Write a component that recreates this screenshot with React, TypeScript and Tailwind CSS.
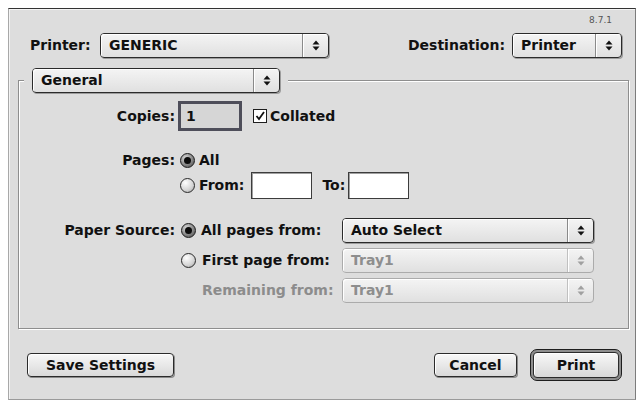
import React from 'react';

const Arrows = ({ disabled }: { disabled?: boolean }) => (
  <svg width="8" height="11" viewBox="0 0 8 11" className={disabled ? 'text-[#a0a0a0]' : 'text-[#111]'}>
    <path d="M4 0.5L7.5 4.5H0.5Z M4 10.5L0.5 6.5H7.5Z" fill="currentColor" />
  </svg>
);

const Popup = ({ label, className, disabled }: { label: string; className: string; disabled?: boolean }) => (
  <div
    className={`flex h-[25px] items-stretch rounded-[4px] border bg-gradient-to-b from-[#f4f4f4] to-[#e0e0e0] ${
      disabled ? 'border-[#ababab] text-[#8e8e8e]' : 'border-[#2b2b2b] text-[#111] shadow-[1px_1px_0_#9c9c9c]'
    } ${className}`}
  >
    <div className="flex flex-1 items-center rounded-l-[3px] pl-[8px] shadow-[inset_1px_1px_0_#ffffff]">{label}</div>
    <div
      className={`flex w-[26px] items-center justify-center rounded-r-[3px] border-l shadow-[inset_1px_1px_0_#ffffff] ${
        disabled ? 'border-[#c0c0c0]' : 'border-[#8a8a8a]'
      }`}
    >
      <Arrows disabled={disabled} />
    </div>
  </div>
);

const Radio = ({ checked }: { checked?: boolean }) =>
  checked ? (
    <span className="flex h-[15px] w-[15px] shrink-0 items-center justify-center rounded-full border border-[#1a1a1a] bg-[radial-gradient(circle_at_35%_30%,#d8d8d8,#6a6a6a_75%)]">
      <span className="h-[7px] w-[7px] rounded-full bg-[#0c0c0c]" />
    </span>
  ) : (
    <span className="block h-[15px] w-[15px] shrink-0 rounded-full border border-[#2a2a2a] bg-[radial-gradient(circle_at_35%_30%,#ffffff,#d4d4d4_60%,#9c9c9c)]" />
  );

const Field = ({ className, children }: { className: string; children?: React.ReactNode }) => (
  <div className={`flex items-center border border-[#3c3c3c] bg-white shadow-[inset_1px_1px_0_#a0a0a0] ${className}`}>
    {children}
  </div>
);

const Btn = ({ children, className }: { children: React.ReactNode; className: string }) => (
  <button
    type="button"
    className={`flex h-[24px] items-center justify-center rounded-[4px] border border-[#2b2b2b] bg-gradient-to-b from-[#f8f8f8] to-[#d9d9d9] text-[#111] shadow-[1px_1px_0_#8a8a8a,inset_1px_1px_0_#ffffff] ${className}`}
  >
    {children}
  </button>
);

export default function App() {
  return (
    <div className="h-[401px] w-[640px] bg-white pl-[8px] pt-[8px]">
      <div className="flex h-[392px] w-[628px] flex-col border-t border-l border-r border-b border-t-[#333333] border-l-[#a8a8a8] border-r-[#7c7c7c] border-b-[#9a9a9a] bg-[#dddddd] font-['DejaVu_Sans',sans-serif] text-[14px] font-bold text-[#111] shadow-[inset_1px_1px_0_#f4f4f4]">
        <div className="h-[24px] pr-[23px] pt-[6px] text-right text-[9px] leading-[10px] font-normal text-[#555]">8.7.1</div>

        <div className="flex h-[25px] items-center">
          <span className="ml-[21px] w-[70px]">Printer:</span>
          <Popup label="GENERIC" className="w-[229px]" />
          <span className="ml-auto mr-[7px]">Destination:</span>
          <Popup label="Printer" className="mr-[13px] w-[110px]" />
        </div>

        <div className="relative ml-[9px] mt-[22px] h-[249px] w-[611px] border border-[#8e8e8e] pt-[20px] shadow-[inset_1px_1px_0_#ffffff,1px_1px_0_#ffffff]">
          <div className="absolute left-[5px] top-[-13px] bg-[#dddddd] px-[8px]">
            <Popup label="General" className="w-[248px]" />
          </div>

          <div className="flex h-[30px] items-center">
            <span className="w-[156px] text-right">Copies:</span>
            <div className="ml-[3px] flex h-[30px] w-[64px] items-center border-[3px] border-[#4e4e5a] bg-[#d6d6d6] pl-[5px]">1</div>
            <span className="ml-[11px] flex h-[14px] w-[14px] items-center justify-center border border-[#1e1e1e] bg-white">
              <svg width="12" height="12" viewBox="0 0 12 12">
                <path d="M2.5 6L5 9L10 2" fill="none" stroke="#111" strokeWidth="1.8" />
              </svg>
            </span>
            <span className="ml-[3px]">Collated</span>
          </div>

          <div className="mt-[21px] flex h-[16px] items-center">
            <span className="w-[156px] text-right">Pages:</span>
            <span className="ml-[5px]">
              <Radio checked />
            </span>
            <span className="ml-[4px]">All</span>
          </div>
          <div className="mt-[4px] flex h-[27px] items-center">
            <span className="ml-[161px]">
              <Radio />
            </span>
            <span className="ml-[4px]">From:</span>
            <Field className="ml-[7px] h-[27px] w-[61px]" />
            <span className="ml-[10px]">To:</span>
            <Field className="ml-[3px] h-[27px] w-[61px]" />
          </div>

          <div className="mt-[19px] flex h-[25px] items-center">
            <span className="w-[156px] text-right">Paper Source:</span>
            <div className="ml-[6px] flex w-[161px] items-center">
              <Radio checked />
              <span className="ml-[5px]">All pages from:</span>
            </div>
            <Popup label="Auto Select" className="w-[252px]" />
          </div>
          <div className="mt-[5px] flex h-[25px] items-center">
            <div className="ml-[162px] flex w-[161px] items-center">
              <Radio />
              <span className="ml-[6px]">First page from:</span>
            </div>
            <Popup label="Tray1" className="w-[252px]" disabled />
          </div>
          <div className="mt-[5px] flex h-[25px] items-center">
            <div className="ml-[162px] flex w-[161px] items-center pl-[21px] text-[#8c8c8c]">Remaining from:</div>
            <Popup label="Tray1" className="w-[252px]" disabled />
          </div>
        </div>

        <div className="mt-[20px] flex h-[32px] items-center">
          <Btn className="ml-[18px] w-[147px]">Save Settings</Btn>
          <Btn className="ml-auto w-[83px]">Cancel</Btn>
          <div className="ml-[13px] mr-[13px] flex h-[32px] w-[92px] items-center justify-center rounded-[7px] border border-[#1e1e1e] bg-[#8e8e8e] p-[2px]">
            <Btn className="h-full w-full">Print</Btn>
          </div>
        </div>
      </div>
    </div>
  );
}
